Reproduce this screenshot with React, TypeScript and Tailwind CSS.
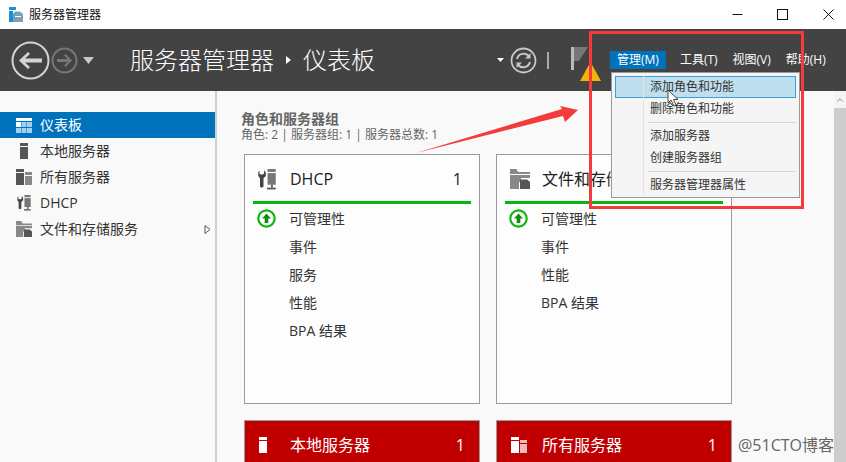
import { ChevronUp } from 'lucide-react';

const font = { fontFamily: '"Open Sans", "Noto Sans CJK SC", sans-serif' };

function ServerIcon({ fill = '#555', className = '' }: { fill?: string; className?: string }) {
  return (
    <svg width="8" height="16" viewBox="0 0 8 16" className={className}>
      <rect x="0" y="0" width="8" height="3" fill={fill} />
      <rect x="0" y="4" width="8" height="12" fill={fill} />
    </svg>
  );
}

function AllServersIcon({ main = '#555', side = '#888' }: { main?: string; side?: string }) {
  return (
    <svg width="17" height="16" viewBox="0 0 17 16">
      <rect x="0" y="0" width="8" height="3" fill={main} />
      <rect x="0" y="4" width="8" height="12" fill={main} />
      <rect x="9" y="3" width="7" height="3" fill={side} />
      <rect x="9" y="7" width="7" height="9" fill={side} />
    </svg>
  );
}

function DhcpIcon({ w = 15, h = 18 }: { w?: number; h?: number }) {
  return (
    <svg width={w} height={h} viewBox="0 0 15 18">
      <path d="M1 1 L1 4 L3 5 L5 4 L5 1 L6.5 3 L6.5 6 L4.5 8 L4.5 15 Q3 17 1.5 15 L1.5 8 L0 6 L0 3 Z" fill="#444" />
      <rect x="8" y="0" width="7" height="2.5" fill="#777" />
      <rect x="8" y="3.5" width="7" height="10" fill="#777" />
      <rect x="11" y="13.5" width="1.5" height="2.5" fill="#555" />
      <rect x="7.5" y="16" width="7.5" height="1.5" fill="#555" />
    </svg>
  );
}

function FilesIcon({ w = 16, h = 16 }: { w?: number; h?: number }) {
  return (
    <svg width={w} height={h} viewBox="0 0 20 20">
      <path d="M0 0 H7 V2 H8 V3 H20 V5 H0 Z" fill="#888" />
      <path d="M0 6 H20 V9 H11 V13 H9 V20 H0 Z" fill="#888" />
      <path d="M10 10.5 H17 L20 13 V20 H10 Z" fill="#555" />
    </svg>
  );
}

function TableIcon() {
  return (
    <svg width="16" height="15" viewBox="0 0 16 15">
      <rect x="0" y="0" width="16" height="3" fill="#fff" />
      <rect x="0" y="4" width="5" height="5" fill="#fff" />
      <rect x="5.5" y="4" width="5" height="5" fill="#9fd0ee" />
      <rect x="11" y="4" width="5" height="5" fill="#9fd0ee" />
      <rect x="0" y="10" width="5" height="5" fill="#9fd0ee" />
      <rect x="5.5" y="10" width="5" height="5" fill="#9fd0ee" />
      <rect x="11" y="10" width="5" height="5" fill="#9fd0ee" />
    </svg>
  );
}

function UpIcon() {
  return (
    <svg width="19" height="19" viewBox="0 0 19 19">
      <circle cx="9.5" cy="9.5" r="8.2" fill="#fff" stroke="#0fb40f" strokeWidth="2.2" />
      <path d="M9.5 4.5 L14 9.5 H11.3 V14 H7.7 V9.5 H5 Z" fill="#0a8f0a" />
    </svg>
  );
}

function SidebarRow({ icon, label, active, arrow }: { icon: React.ReactNode; label: string; active?: boolean; arrow?: boolean }) {
  return (
    <div className={`flex h-[26px] items-center text-[14px] ${active ? 'bg-[#0072bc] text-white' : 'text-[#333]'}`}>
      <span className="flex w-[40px] shrink-0 justify-center pl-[8px]">{icon}</span>
      <span className="flex-1 pb-[2px]">{label}</span>
      {arrow && (
        <svg width="7" height="9" viewBox="0 0 7 9" className="mr-[4px]">
          <path d="M1 0.5 L6 4.5 L1 8.5 Z" fill="#fff" stroke="#555" />
        </svg>
      )}
    </div>
  );
}

function RoleCard({ icon, title, count, rows }: { icon: React.ReactNode; title: string; count?: string; rows: string[] }) {
  return (
    <div className="h-[250px] w-[236px] border border-[#9a9a9a] bg-[#fdfdfd]">
      <div className="flex h-[46px] items-center pl-[13px] pr-[17px] pt-[2px]">
        <span className="flex w-[32px] justify-start">{icon}</span>
        <span className="flex-1 whitespace-nowrap text-[16px] text-[#222]">{title}</span>
        {count && <span className="text-[16px] text-[#222]">{count}</span>}
      </div>
      <div className="mx-[8px] h-[3px] bg-[#0bb40b]" />
      <div>
        {rows.map((row, i) => (
          <div key={row} className="flex h-[28px] items-center text-[14px] text-[#333]">
            <span className="flex w-[44px] justify-center pr-[1px]">{i === 0 && <UpIcon />}</span>
            <span>{row}</span>
          </div>
        ))}
      </div>
    </div>
  );
}

function RedCard({ icon, title, count }: { icon: React.ReactNode; title: string; count: string }) {
  return (
    <div className="flex h-[60px] w-[236px] items-start border border-[#9a9a9a] bg-[#c00000] pl-[14px] pr-[14px] pt-[13px] text-white">
      <span className="flex w-[31px] pt-[3px]">{icon}</span>
      <span className="flex-1 text-[16px] leading-[22px]">{title}</span>
      <span className="text-[16px] leading-[22px]">{count}</span>
    </div>
  );
}

function MenuItem({ label, hover }: { label: string; hover?: boolean }) {
  return (
    <div className={`flex h-[22px] items-center text-[12px] text-[#333] ${hover ? 'border border-[#3aa0d8] bg-[#c0dfee]' : 'border border-transparent'}`}>
      <span className="w-[34px] shrink-0" />
      <span className="whitespace-nowrap">{label}</span>
    </div>
  );
}

export default function App() {
  return (
    <div style={font} className="relative flex h-[462px] w-[846px] flex-col overflow-hidden bg-white">
      {/* title bar */}
      <div className="flex h-[29px] shrink-0 items-center pl-[9px] text-[12px] text-[#111]">
        <svg width="15" height="15" viewBox="0 0 15 15">
          <rect x="0" y="0" width="7" height="3" fill="#1b8fd8" />
          <rect x="0" y="4" width="4" height="11" fill="#1b8fd8" />
          <path d="M4 7 L6 4.5 H11 L14 7 V15 H4 Z" fill="#7aa0b8" />
          <rect x="6" y="9" width="6" height="1" fill="#fff" />
        </svg>
        <span className="ml-[5px] flex-1">服务器管理器</span>
        <div className="flex items-center">
          <svg width="11" height="11" viewBox="0 0 11 11" className="mr-[34px]">
            <path d="M0.5 5.5 H10.5" stroke="#111" strokeWidth="1" />
          </svg>
          <svg width="11" height="11" viewBox="0 0 11 11" className="mr-[35px]">
            <rect x="0.5" y="0.5" width="10" height="10" fill="none" stroke="#111" strokeWidth="1" />
          </svg>
          <svg width="11" height="11" viewBox="0 0 11 11" className="mr-[12px]">
            <path d="M0.5 0.5 L10.5 10.5 M10.5 0.5 L0.5 10.5" stroke="#111" strokeWidth="1" />
          </svg>
        </div>
      </div>

      {/* header */}
      <div className="flex h-[62px] shrink-0 items-center bg-[#434343] text-white">
        <div className="ml-[11px] flex items-center">
          <svg width="39" height="39" viewBox="0 0 39 39">
            <circle cx="19.5" cy="19.5" r="18" fill="none" stroke="#d4d4d4" strokeWidth="2" />
            <path d="M8 19.5 L17 11 L19 13 L14 17.5 H31 V21.5 H14 L19 26 L17 28 Z" fill="#d4d4d4" />
          </svg>
          <svg width="27" height="27" viewBox="0 0 27 27" className="ml-[1px]">
            <circle cx="13.5" cy="13.5" r="12" fill="none" stroke="#777" strokeWidth="2" />
            <path d="M21 13.5 L14.5 7 L13 8.5 L16.5 12 H6 V15 H16.5 L13 18.5 L14.5 20 Z" fill="#777" />
          </svg>
          <svg width="11" height="7" viewBox="0 0 11 7" className="ml-[5px]">
            <path d="M0 0 H11 L5.5 7 Z" fill="#c8c8c8" />
          </svg>
        </div>
        <div className="ml-[36px] flex items-center whitespace-nowrap text-[24px] font-light">
          <span>服务器管理器</span>
          <svg width="5" height="8" viewBox="0 0 5 8" className="mx-[12px]">
            <path d="M0 0 L5 4 L0 8 Z" fill="#fff" />
          </svg>
          <span>仪表板</span>
        </div>
        <div className="ml-[122px] flex items-center">
          <svg width="7" height="4" viewBox="0 0 7 4">
            <path d="M0 0 H7 L3.5 4 Z" fill="#fff" />
          </svg>
          <svg width="27" height="27" viewBox="0 0 27 27" className="ml-[6px]">
            <circle cx="13.5" cy="13.5" r="12" fill="none" stroke="#c8c8c8" strokeWidth="1.8" />
            <path d="M7 12 A7 7 0 0 1 19 9 M20 15 A7 7 0 0 1 8 18" fill="none" stroke="#c8c8c8" strokeWidth="2" />
            <path d="M20.5 6 V11.5 H15 Z M6.5 21 V15.5 H12 Z" fill="#c8c8c8" />
          </svg>
          <span className="ml-[10px] h-[17px] w-[2px] bg-[#aaa]" />
          <div className="relative ml-[22px] h-[34px] w-[38px]">
            <svg width="18" height="25" viewBox="0 0 18 25" className="absolute left-0 top-[4px]">
              <rect x="0" y="0" width="3" height="23" fill="#bbb" />
              <path d="M3 0 H17 L8 14 H3 Z" fill="#777" />
            </svg>
            <svg width="21" height="19" viewBox="0 0 21 19" className="absolute left-[9px] top-[19px]">
              <path d="M10.5 0 L21 19 H0 Z" fill="#f5b20d" />
              <rect x="9.5" y="6" width="2" height="8" fill="#222" />
              <rect x="9.5" y="15" width="2" height="2" fill="#222" />
            </svg>
          </div>
        </div>
        <div className="flex items-center whitespace-nowrap text-[12px]">
          <span className="ml-[1px] flex h-[18px] items-center bg-[#0072bc] px-[7px]">管理(M)</span>
          <span className="ml-[14px]">工具(T)</span>
          <span className="ml-[15px]">视图(V)</span>
          <span className="ml-[15px]">帮助(H)</span>
        </div>
      </div>

      {/* main */}
      <div className="flex min-h-0 flex-1 bg-[#f9f9f9]">
        <div className="w-[217px] shrink-0 border-r-2 border-[#d0d0d0] pt-[21px]">
          <SidebarRow active icon={<TableIcon />} label="仪表板" />
          <SidebarRow icon={<ServerIcon />} label="本地服务器" />
          <SidebarRow icon={<AllServersIcon />} label="所有服务器" />
          <SidebarRow icon={<DhcpIcon w={14} h={16} />} label="DHCP" />
          <SidebarRow icon={<FilesIcon />} label="文件和存储服务" arrow />
        </div>

        <div className="min-w-0 flex-1 pl-[27px] pt-[20px]">
          <div className="-ml-[3px] text-[14px] font-bold leading-[16px] text-[#666]">角色和服务器组</div>
          <div className="-ml-[3px] mt-[1px] text-[12px] leading-[14px] text-[#666]">角色: 2 | 服务器组: 1 | 服务器总数: 1</div>
          <div className="mt-[12px] flex gap-[16px]">
            <RoleCard icon={<DhcpIcon w={18} h={21} />} title="DHCP" count="1" rows={['可管理性', '事件', '服务', '性能', 'BPA 结果']} />
            <RoleCard icon={<FilesIcon w={20} h={20} />} title="文件和存储服务" count="1" rows={['可管理性', '事件', '性能', 'BPA 结果']} />
          </div>
          <div className="mt-[16px] flex gap-[16px]">
            <RedCard icon={<ServerIcon fill="#fff" />} title="本地服务器" count="1" />
            <RedCard icon={<AllServersIcon main="#fff" side="#ecbcbc" />} title="所有服务器" count="1" />
          </div>
        </div>

        <div className="w-[12px] shrink-0 bg-[#cdcdcd]">
          <div className="flex h-[17px] items-center justify-center bg-[#f4f4f4]">
            <ChevronUp size={10} className="text-[#777]" />
          </div>
        </div>
      </div>

      {/* menu */}
      <div className="absolute left-[611px] top-[72px] h-[126px] w-[189px] border border-[#9a9a9a] bg-[#f5f5f5] px-[3px] pt-[2px]">
        <span className="absolute bottom-[3px] left-[31px] top-[3px] w-px bg-[#e2e2e2]" />
        <div className="pt-[1px]">
          <MenuItem hover label="添加角色和功能" />
          <MenuItem label="删除角色和功能" />
          <div className="my-[2px] ml-[33px] h-px bg-[#d8d8d8]" />
          <MenuItem label="添加服务器" />
          <MenuItem label="创建服务器组" />
          <div className="my-[2px] ml-[33px] h-px bg-[#d8d8d8]" />
          <MenuItem label="服务器管理器属性" />
        </div>
      </div>

      {/* cursor */}
      <svg width="13" height="18" viewBox="0 0 13 18" className="absolute left-[667px] top-[89px]">
        <path d="M1 1 V14 L4 11 L7 17 L9 16 L6.5 10.5 H11 Z" fill="#fff" stroke="#444" strokeWidth="1" />
      </svg>

      {/* annotation */}
      <div className="absolute left-[589px] top-[31px] h-[178px] w-[215px] border-[3px] border-[#f43b3b]" />
      <svg width="180" height="60" viewBox="0 0 180 60" className="absolute left-[410px] top-[100px]">
        <path d="M6 53 L152 9 L150 6 L168 10 L155 22 L153 16 Z" fill="#f43b3b" />
      </svg>

      <div className="absolute left-[738px] top-[435px] whitespace-nowrap text-[16px] leading-[20px] text-[#666]">@51CTO博客</div>
    </div>
  );
}
